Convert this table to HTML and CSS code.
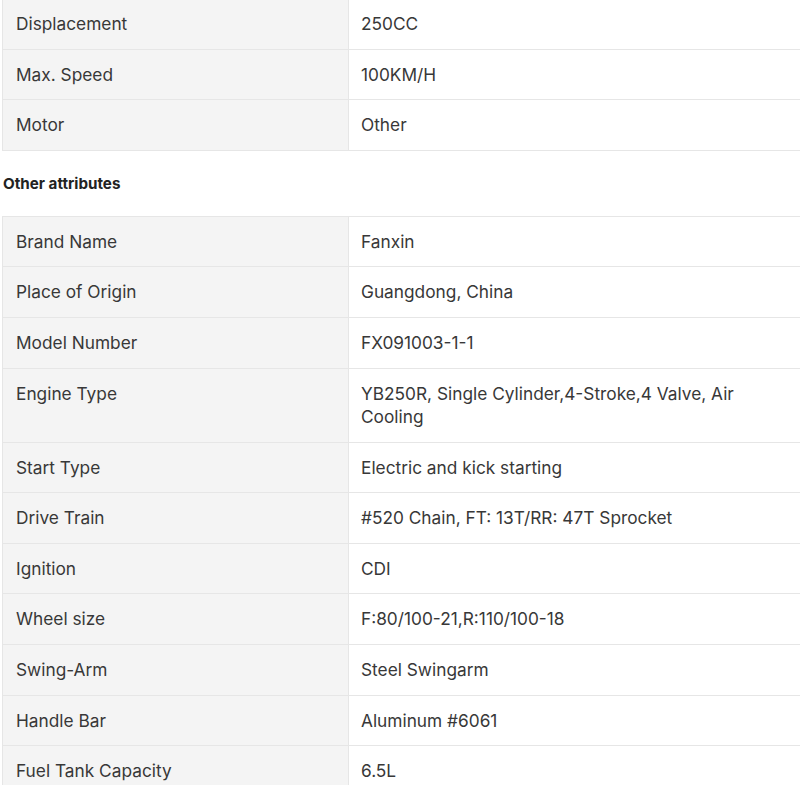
FILE: index.html
```html
<!DOCTYPE html>
<html>
<head>
<meta charset="utf-8">
<link rel="stylesheet" href="styles.css">
</head>
<body>
<div class="page">
  <table class="attrs attrs-first">
    <tr><td class="key">Displacement</td><td class="val">250CC</td></tr>
    <tr><td class="key">Max. Speed</td><td class="val">100KM/H</td></tr>
    <tr><td class="key">Motor</td><td class="val">Other</td></tr>
  </table>
  <h3 class="section-title">Other attributes</h3>
  <table class="attrs">
    <tr><td class="key">Brand Name</td><td class="val">Fanxin</td></tr>
    <tr><td class="key">Place of Origin</td><td class="val">Guangdong, China</td></tr>
    <tr><td class="key">Model Number</td><td class="val">FX091003-1-1</td></tr>
    <tr><td class="key">Engine Type</td><td class="val">YB250R, Single Cylinder,4-Stroke,4 Valve, Air Cooling</td></tr>
    <tr><td class="key">Start Type</td><td class="val">Electric and kick starting</td></tr>
    <tr><td class="key">Drive Train</td><td class="val">#520 Chain, FT: 13T/RR: 47T Sprocket</td></tr>
    <tr><td class="key">Ignition</td><td class="val">CDI</td></tr>
    <tr><td class="key">Wheel size</td><td class="val">F:80/100-21,R:110/100-18</td></tr>
    <tr><td class="key">Swing-Arm</td><td class="val">Steel Swingarm</td></tr>
    <tr><td class="key">Handle Bar</td><td class="val">Aluminum #6061</td></tr>
    <tr><td class="key">Fuel Tank Capacity</td><td class="val">6.5L</td></tr>
  </table>
</div>
</body>
</html>
```
FILE: styles.css
```css
html, body {
  margin: 0;
  padding: 0;
  overflow: hidden;
  background: #fff;
}
body {
  font-family: Inter, "Noto Sans", sans-serif;
  color: #333;
}
.page {
  padding-left: 2px;
  width: 800px;
}
.attrs {
  border-collapse: collapse;
  width: 800px;
  table-layout: fixed;
}
.attrs-first {
  margin-top: -2px;
}
.attrs td {
  border: 1px solid #e6e6e6;
  padding: 13.05px 13px;
  font-size: 17.3px;
  line-height: 23.5px;
  vertical-align: top;
  color: #383838;
}
.attrs td.key {
  width: 319px;
  background: #f4f4f4;
}
.attrs td.val {
  padding-left: 12px;
}
.section-title {
  margin: 0;
  padding: 24px 0 24px 1px;
  font-size: 15.2px;
  line-height: 17px;
  font-weight: 700;
  color: #222;
}
```
